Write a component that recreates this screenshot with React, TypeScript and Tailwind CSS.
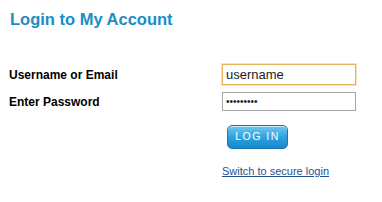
export default function App() {
  return (
    <div className="w-[382px] h-[202px] bg-white font-['Liberation_Sans',Arial,sans-serif]">
      <h1 className="pl-[10px] pt-[9px] text-[16.5px] leading-[20px] font-bold text-[#1a8cc8]">
        Login to My Account
      </h1>

      <form className="mt-[35px] pl-[9px] grid grid-cols-[213px_134px] gap-y-[7px] items-center">
        <label className="text-[12px] font-bold text-black">Username or Email</label>
        <input
          defaultValue="username"
          className="h-[21px] w-[134px] border border-[#e3b35c] shadow-[0_0_0_1px_#f6e3bd] px-[3px] text-[13px] text-[#222] outline-none"
        />

        <label className="text-[12px] font-bold text-black">Enter Password</label>
        <input
          type="password"
          defaultValue="password1"
          className="h-[19px] w-[134px] border border-[#a6a6a6] px-[3px] text-[10px] text-[#222] outline-none"
        />

        <div />
        <div className="pt-[5px] pl-[5px]">
          <button
            type="button"
            className="w-[61px] h-[24px] rounded-[5px] border border-[#1677b3] bg-gradient-to-b from-[#6cc9f2] via-[#2ea3de] to-[#1687cc] text-white text-[10.5px] tracking-[1.5px] shadow-[inset_0_1px_0_rgba(255,255,255,0.6)]"
          >
            LOG IN
          </button>
        </div>

        <div />
        <a href="#" className="pt-[7px] text-[11px] text-[#1f4f8f] underline">
          Switch to secure login
        </a>
      </form>
    </div>
  );
}
